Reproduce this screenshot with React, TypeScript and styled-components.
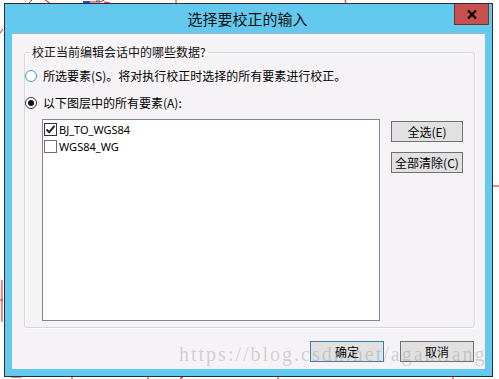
import React from "react";
import styled, { createGlobalStyle } from "styled-components";

const Global = createGlobalStyle`
  html, body { margin: 0; padding: 0; background: #ffffff; }
  body { width: 499px; height: 379px; overflow: hidden; position: relative;
    font-family: "Noto Sans CJK SC", "Noto Sans", sans-serif; }
`;

const Backdrop = styled.svg`
  position: absolute;
  left: 0;
  top: 0;
  z-index: 0;
`;

const Page = styled.div`
  position: relative;
  z-index: 1;
  padding: 3px 0 0 4px;
`;

const Window = styled.div`
  position: relative;
  box-sizing: border-box;
  width: 489px;
  height: 374px;
  border: 1px solid #2e2e2e;
  background: #63c9ef;
  display: flex;
  flex-direction: column;
`;

const TitleBar = styled.div`
  height: 29px;
  display: flex;
  align-items: center;
  justify-content: center;
  font-family: "Noto Sans CJK SC", sans-serif;
  font-size: 15px;
  color: #111;
  padding-right: 2px;
`;

const CloseButton = styled.div`
  position: absolute;
  top: 0;
  right: 3px;
  box-sizing: border-box;
  width: 35px;
  height: 21px;
  background: #c75050;
  border: 1px solid #6d3535;
  border-top: none;
  display: flex;
  align-items: center;
  justify-content: center;
`;

const Client = styled.div`
  margin: 0 7px 7px 7px;
  height: 336px;
  background: #f6f3f6;
  border-top: 1px solid #9fb6c6;
  box-sizing: border-box;
  display: flex;
  flex-direction: column;
  font-size: 12px;
  color: #000;
`;

const Group = styled.fieldset`
  margin: 10px 10px 0 12px;
  padding: 0;
  height: 284px;
  box-sizing: border-box;
  border: 1px solid #d3d8de;
  border-radius: 3px;
  box-shadow: inset 1px 1px 0 #ffffff, 1px 1px 0 #ffffff;
  display: flex;
  flex-direction: column;
  min-width: 0;
`;

const Legend = styled.legend`
  margin-left: 5px;
  padding: 0 2px;
  font-size: 12px;
  line-height: 16px;
  color: #111;
`;

const RadioRow = styled.div<{ $top: number }>`
  display: flex;
  align-items: center;
  gap: 6px;
  height: 16px;
  margin-top: ${(p) => p.$top}px;
  line-height: 16px;
`;

const RadioCircle = styled.span<{ $checked?: boolean; $focus?: boolean }>`
  box-sizing: border-box;
  width: 12px;
  height: 12px;
  border-radius: 50%;
  background: #fff;
  border: 1px solid ${(p) => (p.$focus ? "#3f97de" : "#333")};
  display: flex;
  align-items: center;
  justify-content: center;
  &::after {
    content: "";
    display: ${(p) => (p.$checked ? "block" : "none")};
    width: 6px;
    height: 6px;
    border-radius: 50%;
    background: #111;
  }
`;

const ListArea = styled.div`
  display: flex;
  gap: 11px;
  margin: 8px 0 0 17px;
`;

const ListBox = styled.div`
  box-sizing: border-box;
  width: 338px;
  height: 202px;
  border: 1px solid #828790;
  background: #fff;
  padding: 1px 0 0 1px;
  display: flex;
  flex-direction: column;
`;

const ItemRow = styled.div`
  display: flex;
  align-items: center;
  gap: 2px;
  height: 17px;
  font-family: "Noto Sans", sans-serif;
  font-size: 11px;
  color: #000;
`;

const CheckBox = styled.span<{ $checked?: boolean }>`
  box-sizing: border-box;
  width: 13px;
  height: 13px;
  border: 1px solid ${(p) => (p.$checked ? "#333" : "#707070")};
  background: #fff;
  display: flex;
  align-items: center;
  justify-content: center;
`;

const SideButtons = styled.div`
  display: flex;
  flex-direction: column;
  gap: 10px;
  padding-top: 2px;
`;

const Button = styled.div<{ $default?: boolean; $w?: number }>`
  box-sizing: border-box;
  width: ${(p) => p.$w ?? 72}px;
  height: 21px;
  background: #e1e1e1;
  border: 1px solid ${(p) => (p.$default ? "#3c7fb1" : "#707070")};
  display: flex;
  align-items: center;
  justify-content: center;
  font-size: 12px;
  color: #000;
`;

const Footer = styled.div`
  display: flex;
  justify-content: flex-end;
  gap: 16px;
  margin-top: 13px;
  padding-right: 11px;
`;

const Watermark = styled.div`
  position: absolute;
  left: 174px;
  top: 339px;
  font-family: "Liberation Serif", serif;
  font-size: 20px;
  letter-spacing: 2px;
  color: rgba(130, 130, 130, 0.33);
  white-space: nowrap;
  pointer-events: none;
`;

const Check = () => (
  <svg width="11" height="11" viewBox="0 0 11 11">
    <path d="M1.5 5.5 L4.2 8.3 L9.5 1.8" fill="none" stroke="#222" strokeWidth="2" />
  </svg>
);

const CloseX = () => (
  <svg width="10" height="9" viewBox="0 0 10 9">
    <path d="M1 0.5 L9 8.5 M9 0.5 L1 8.5" stroke="#000" strokeWidth="2.2" />
  </svg>
);

export default function App() {
  return (
    <>
      <Global />
      <Backdrop width="499" height="379" viewBox="0 0 499 379">
        <g stroke="#e01010" strokeWidth="1" fill="none">
          <path d="M29 3 L32 0" />
          <path d="M45 0 L50 3" />
          <path d="M88 2 L100 2 L104 0 M104 2 L110 3" />
          <path d="M176 0 L176 3" />
          <path d="M345 0 L346 3" />
          <path d="M0 33 L3 29" />
          <path d="M2 280 L2 322 M0 300 L3 300" />
          <path d="M11 377 L22 377" />
          <path d="M72 376 L72 379" />
          <path d="M148 376 L148 379" />
          <path d="M180 377 L183 377 L180 379" />
          <path d="M278 376 L278 379" />
          <path d="M453 376 L453 379" />
          <path d="M493 186 L499 186" />
        </g>
        <path d="M83 2 L90 2" stroke="#1e50c8" strokeWidth="2" />
        <path d="M96 1 L100 1" stroke="#1e50c8" strokeWidth="1" />
      </Backdrop>
      <Page>
        <Window>
          <TitleBar>选择要校正的输入</TitleBar>
          <CloseButton>
            <CloseX />
          </CloseButton>
          <Client>
            <Group>
              <Legend>校正当前编辑会话中的哪些数据?</Legend>
              <RadioRow $top={8}>
                <RadioCircle $focus />
                <span>所选要素(S)。将对执行校正时选择的所有要素进行校正。</span>
              </RadioRow>
              <RadioRow $top={11}>
                <RadioCircle $checked />
                <span>以下图层中的所有要素(A):</span>
              </RadioRow>
              <ListArea>
                <ListBox>
                  <ItemRow>
                    <CheckBox $checked>
                      <Check />
                    </CheckBox>
                    <span>BJ_TO_WGS84</span>
                  </ItemRow>
                  <ItemRow>
                    <CheckBox />
                    <span>WGS84_WG</span>
                  </ItemRow>
                </ListBox>
                <SideButtons>
                  <Button>全选(E)</Button>
                  <Button>全部清除(C)</Button>
                </SideButtons>
              </ListArea>
            </Group>
            <Footer>
              <Button $default $w={74}>确定</Button>
              <Button $w={74}>取消</Button>
            </Footer>
          </Client>
          <Watermark>https://blog.csdn.net/aganliang</Watermark>
        </Window>
      </Page>
    </>
  );
}
